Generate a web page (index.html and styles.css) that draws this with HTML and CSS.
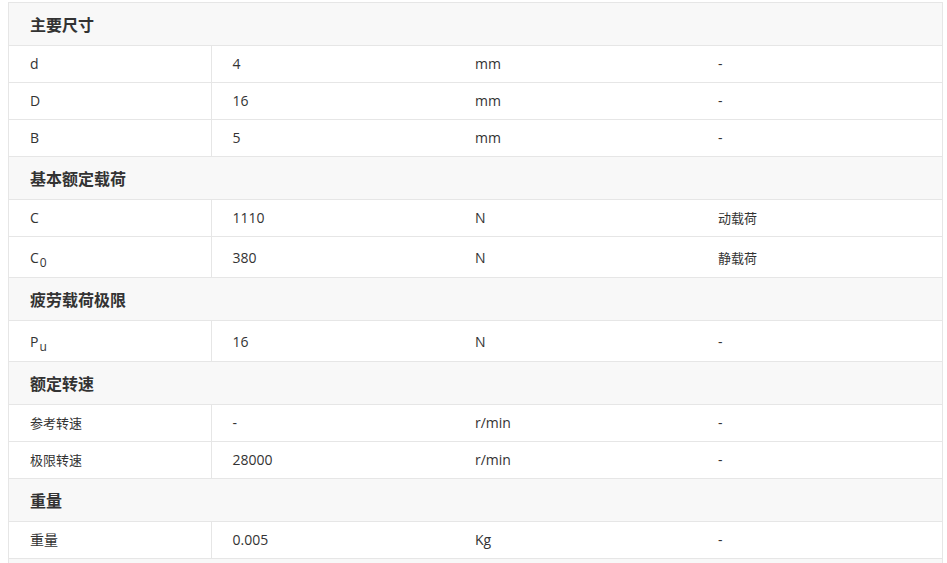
FILE: index.html
```html
<!DOCTYPE html>
<html lang="zh">
<head>
<meta charset="utf-8">
<title>参数</title>
<link rel="stylesheet" href="styles.css">
</head>
<body>
<div class="wrap">
<table class="spec">
<colgroup><col class="c1"><col class="c2"><col class="c3"><col class="c4"></colgroup>
<tbody>
<tr class="head first"><th colspan="4">主要尺寸</th></tr>
<tr><td>d</td><td>4</td><td>mm</td><td>-</td></tr>
<tr><td>D</td><td>16</td><td>mm</td><td>-</td></tr>
<tr><td>B</td><td>5</td><td>mm</td><td>-</td></tr>
<tr class="head"><th colspan="4">基本额定载荷</th></tr>
<tr><td>C</td><td>1110</td><td>N</td><td class="cn">动载荷</td></tr>
<tr class="tall"><td>C<sub>0</sub></td><td>380</td><td>N</td><td class="cn">静载荷</td></tr>
<tr class="head"><th colspan="4">疲劳载荷极限</th></tr>
<tr class="tall"><td>P<sub>u</sub></td><td>16</td><td>N</td><td>-</td></tr>
<tr class="head"><th colspan="4">额定转速</th></tr>
<tr><td class="cn">参考转速</td><td>-</td><td>r/min</td><td>-</td></tr>
<tr><td class="cn">极限转速</td><td>28000</td><td>r/min</td><td>-</td></tr>
<tr class="head"><th colspan="4">重量</th></tr>
<tr><td>重量</td><td>0.005</td><td>Kg</td><td>-</td></tr>
<tr class="head"><th colspan="4">&nbsp;</th></tr>
</tbody>
</table>
</div>
</body>
</html>
```

FILE: styles.css
```css
html, body {
  margin: 0;
  padding: 0;
  background: #fff;
}
body {
  padding: 2px 0 0 8px;
  font-family: "Open Sans", "Noto Sans CJK SC", sans-serif;
  color: #333;
}
.wrap {
  width: 935px;
  box-sizing: border-box;
  border: 1px solid #e6e6e6;
  border-bottom: none;
  padding-right: 1px;
}
.spec {
  width: 933px;
  border-collapse: collapse;
  table-layout: fixed;
}
.c1 { width: 202px; }
.c2 { width: 243px; }
.c3 { width: 243px; }
.c4 { width: 245px; }
.spec th,
.spec td {
  padding: 0 0 0 21px;
  text-align: left;
  border-bottom: 1px solid #e6e6e6;
  font-size: 14px;
  line-height: 20px;
  height: 37px;
  box-sizing: border-box;
  vertical-align: middle;
}
.spec td:first-child {
  border-right: 1px solid #e6e6e6;
}
.spec td.cn {
  font-size: 13px;
}
.spec tr.head th {
  background: #f8f8f8;
  font-family: "Noto Sans CJK SC", sans-serif;
  font-weight: bold;
  font-size: 16px;
  height: 43px;
}
.spec tr.head.first th {
  height: 42px;
}
.spec tr.tall td {
  height: 41px;
  padding-top: 2px;
}
.spec sub {
  font-size: 12px;
  line-height: 0;
  vertical-align: -4px;
  margin-left: 1px;
}
```
